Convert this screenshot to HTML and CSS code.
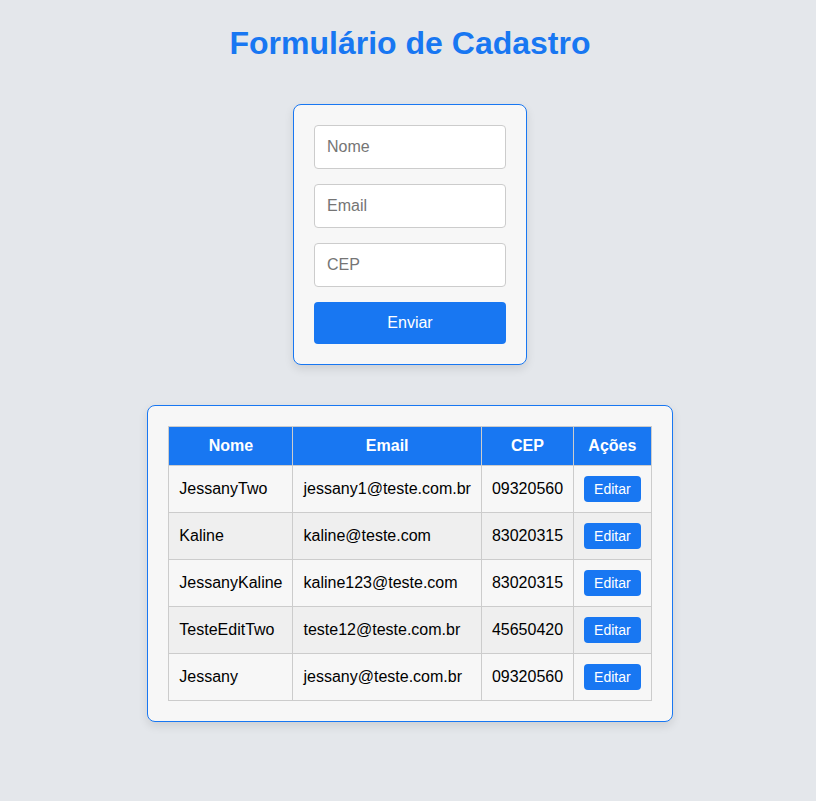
FILE: index.html
```html
<!DOCTYPE html>
<html lang="pt-BR">
<head>
<meta charset="utf-8">
<title>Formulário de Cadastro</title>
<link rel="stylesheet" href="styles.css">
</head>
<body>
<main class="page">
  <h1 class="title">Formulário de Cadastro</h1>
  <form class="card form-card">
    <input class="field" type="text" placeholder="Nome">
    <input class="field" type="email" placeholder="Email">
    <input class="field" type="text" placeholder="CEP">
    <button class="submit" type="button">Enviar</button>
  </form>
  <section class="card table-card">
    <table class="users">
      <thead>
        <tr><th>Nome</th><th>Email</th><th>CEP</th><th>Ações</th></tr>
      </thead>
      <tbody>
        <tr><td>JessanyTwo</td><td>jessany1@teste.com.br</td><td>09320560</td><td><button class="edit" type="button">Editar</button></td></tr>
        <tr><td>Kaline</td><td>kaline@teste.com</td><td>83020315</td><td><button class="edit" type="button">Editar</button></td></tr>
        <tr><td>JessanyKaline</td><td>kaline123@teste.com</td><td>83020315</td><td><button class="edit" type="button">Editar</button></td></tr>
        <tr><td>TesteEditTwo</td><td>teste12@teste.com.br</td><td>45650420</td><td><button class="edit" type="button">Editar</button></td></tr>
        <tr><td>Jessany</td><td>jessany@teste.com.br</td><td>09320560</td><td><button class="edit" type="button">Editar</button></td></tr>
      </tbody>
    </table>
  </section>
</main>
</body>
</html>
```
FILE: styles.css
```css
* { box-sizing: border-box; }
html, body { margin: 0; padding: 0; }
body {
  background: #e4e7eb;
  font-family: "Liberation Sans", Arial, sans-serif;
  color: #000;
}
.page {
  display: flex;
  flex-direction: column;
  align-items: center;
  padding: 25px 0 40px 4px;
}
.title {
  margin: 0 0 42px;
  font-size: 32px;
  font-weight: bold;
  color: #1877f2;
  line-height: 37px;
}
.card {
  background: #f7f7f7;
  border: 1px solid #1877f2;
  border-radius: 8px;
  box-shadow: 0 4px 10px rgba(0, 0, 0, 0.1);
  padding: 20px;
}
.form-card {
  width: 234px;
  display: flex;
  flex-direction: column;
  gap: 15px;
  margin-bottom: 40px;
}
.field {
  width: 100%;
  height: 44px;
  padding: 12px;
  border: 1px solid #ccc;
  border-radius: 4px;
  background: #fff;
  font: 16px "Liberation Sans", Arial, sans-serif;
  color: #000;
}
.field::placeholder { color: #757575; }
.submit {
  height: 42px;
  border: 0;
  border-radius: 4px;
  background: #1877f2;
  color: #fff;
  font: 16px "Liberation Sans", Arial, sans-serif;
}
.users {
  border-collapse: collapse;
  font-size: 16px;
}
.users th, .users td {
  border: 1px solid #ccc;
  padding: 10px;
  text-align: left;
  line-height: 18px;
}
.users th {
  background: #1877f2;
  color: #fff;
  font-weight: bold;
  text-align: center;
}
.users tbody tr:nth-child(even) { background: #efefef; }
.edit {
  display: block;
  height: 26px;
  padding: 0 10px;
  border: 0;
  border-radius: 4px;
  background: #1877f2;
  color: #fff;
  font: 14px "Liberation Sans", Arial, sans-serif;
}
```
